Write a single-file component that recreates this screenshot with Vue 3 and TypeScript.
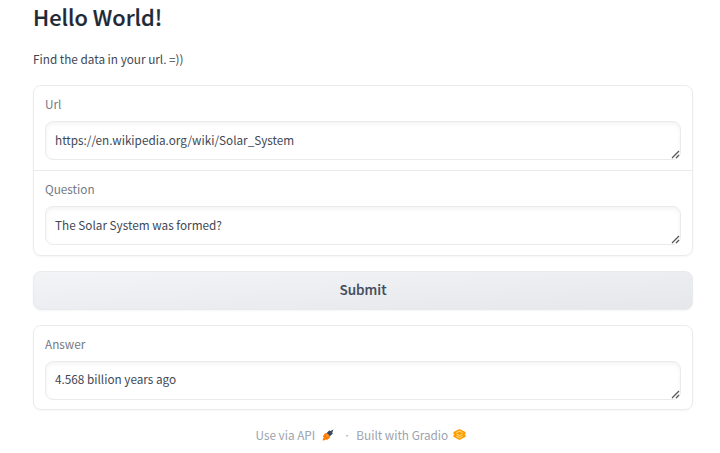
<script setup lang="ts">
import { ref } from 'vue'

interface Field {
  label: string
  value: string
}

const inputs = ref<Field[]>([
  { label: 'Url', value: 'https://en.wikipedia.org/wiki/Solar_System' },
  { label: 'Question', value: 'The Solar System was formed?' },
])
const outputs = ref<Field[]>([{ label: 'Answer', value: '4.568 billion years ago' }])
</script>

<template>
  <main class="app">
    <h1>Hello World!</h1>
    <p class="intro">Find the data in your url. =))</p>

    <form class="stack" @submit.prevent>
      <section v-for="(group, g) in [inputs, outputs]" :key="g" class="group" :class="{ last: g === 1 }">
        <label v-for="field in group" :key="field.label" class="block">
          <span class="label">{{ field.label }}</span>
          <span class="box">
            <textarea v-model="field.value" rows="1" spellcheck="false" :readonly="g === 1"></textarea>
            <svg class="grip" viewBox="0 0 9 9">
              <path d="M1 8L8 1M5 8L8 5" />
            </svg>
          </span>
        </label>
      </section>
      <button type="submit" class="submit">Submit</button>
    </form>

    <footer>
      <span class="api">Use via API</span>
      <svg class="rocket" viewBox="0 0 12 12">
        <path fill="#ff7c00" d="M2.8 4.6L5 4 8 7 7.6 9.1 4.7 11.3 4.2 9.9 2.5 11.2.7 11.5 1 9.6 2 8.2.7 7.7Z" />
        <path fill="#3c4963" d="M4.7 4.1L7.2 1.5 8.6 2.1 11.5.5 10.3 3.4 10.7 4.8 7.9 7.3Z" />
        <circle cx="5.5" cy="6.5" r="1.3" fill="#ff9838" />
      </svg>
      <span class="dot">·</span>
      <span class="built">Built with Gradio</span>
      <svg class="gradio" viewBox="0 0 13 11">
        <path fill="#ff9d00" d="M6.5.1L12.6 3.1V4.6L11.6 5.4 12.6 6.2V7.7L6.5 10.9.4 7.7V6.2L1.4 5.4.4 4.6V3.1Z" />
        <path fill="none" stroke="#ffe08a" stroke-width="1" d="M3.4 3.7L6.5 2.2 9.6 3.7M3.4 5.2L6.5 6.6 9.6 5.2M3.4 7.2L6.5 8.7 9.6 7.2" />
      </svg>
    </footer>
  </main>
</template>

<style>
body {
  background: #fff;
}
</style>

<style scoped>
.app {
  box-sizing: border-box;
  height: 453px;
  padding: 3px 27px 0 33px;
  overflow: hidden;
  font-family: 'Source Sans Pro', 'Noto Sans CJK JP', 'Noto Sans', sans-serif;
  font-size: 11.75px;
  color: #414753;
}
h1 {
  margin: 0;
  height: 28px;
  line-height: 28px;
  font-size: 21.8px;
  font-weight: 500;
  -webkit-text-stroke: 0.2px #1f2937;
  color: #1f2937;
}
.intro {
  margin: 18px 0 0;
  height: 20px;
  line-height: 20px;
}
.stack {
  display: flex;
  flex-direction: column;
  gap: 15px;
  margin-top: 16px;
}
.group {
  box-sizing: border-box;
  border: 1px solid #ebebef;
  border-radius: 8px;
  box-shadow: 0 1px 2px rgba(0, 0, 0, 0.04);
}
.group.last {
  order: 2;
}
.block {
  display: flex;
  flex-direction: column;
  box-sizing: border-box;
  height: 84px;
  padding: 8px 11px 0;
}
.block + .block {
  height: 85px;
  border-top: 1px solid #ebebef;
}
.group.last .block {
  height: 83px;
}
.label {
  height: 20px;
  line-height: 20px;
  margin-bottom: 7px;
  color: #747a85;
}
.group.last .label {
  height: 19px;
  line-height: 19px;
  margin-bottom: 8px;
}
.box {
  display: flex;
  position: relative;
  height: 39px;
}
textarea {
  box-sizing: border-box;
  width: 100%;
  height: 39px;
  margin: 0;
  padding: 8px 9px;
  border: 1px solid #ebebef;
  border-radius: 8px;
  outline: none;
  background: #fff;
  box-shadow: inset 0 2px 4px rgba(0, 0, 0, 0.05);
  color: #414753;
  font: inherit;
  line-height: 20px;
  resize: none;
  overflow: hidden;
}
.group.last textarea {
  padding-top: 7px;
}
.grip {
  position: absolute;
  right: 1px;
  bottom: 1px;
  width: 9px;
  height: 9px;
  fill: none;
  stroke: #555;
  stroke-width: 1.2;
}
.submit {
  order: 1;
  height: 39px;
  padding: 0 0 3px;
  border: 1px solid #e9eaee;
  border-radius: 8px;
  background: linear-gradient(to bottom right, #f3f4f6, #e5e7eb);
  box-shadow: 0 1px 2px rgba(0, 0, 0, 0.04);
  color: #414b5a;
  font: inherit;
  font-size: 13.5px;
  font-weight: 500;
  -webkit-text-stroke: 0.15px #414b5a;
}
footer {
  display: flex;
  align-items: center;
  height: 20px;
  margin: 15px 0 0 222.5px;
  line-height: 20px;
  color: #9ca3af;
  white-space: nowrap;
}
.rocket {
  width: 12px;
  height: 12px;
  margin-left: 7px;
}
.dot {
  margin: 0 6px 0 9.5px;
}
.gradio {
  width: 13px;
  height: 11px;
  margin: 0 0 2px 4.5px;
}
</style>
